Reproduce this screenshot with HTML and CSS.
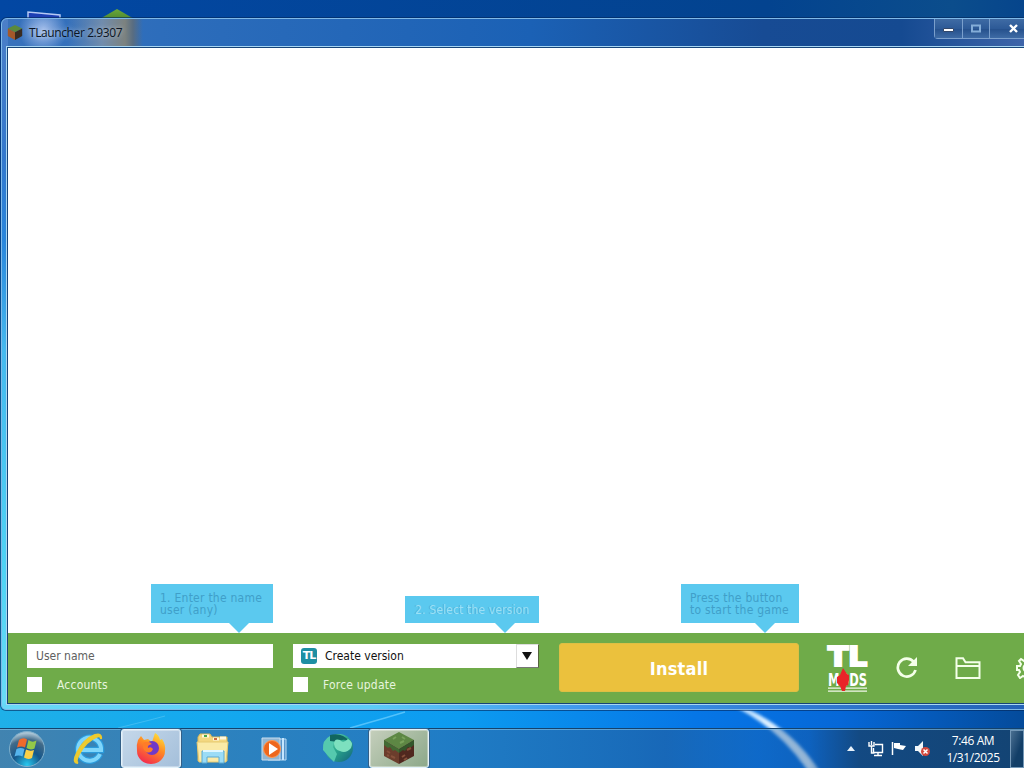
FILE: index.html
```html
<!DOCTYPE html>
<html lang="en">
<head>
	<title>TLauncher 2.9307</title>
	<meta charset="UTF-8">
	<link rel="stylesheet" href="styles.css">
</head>
<body>
	<div id="desktop">
		<svg class="wallpaper" width="1024" height="768" viewBox="0 0 1024 768">
			<defs>
				<linearGradient id="topSky" x1="0" x2="1" y1="0" y2="0">
					<stop offset="0" stop-color="#0247a3"/>
					<stop offset=".75" stop-color="#03438f"/>
					<stop offset=".93" stop-color="#0b4d8c"/>
					<stop offset="1" stop-color="#06458c"/>
				</linearGradient>
				<linearGradient id="leftSky" x1="0" x2="0" y1="0" y2="1">
					<stop offset="0" stop-color="#0548a4"/>
					<stop offset=".3" stop-color="#0869cf"/>
					<stop offset=".6" stop-color="#16aeee"/>
					<stop offset="1" stop-color="#20b5e8"/>
				</linearGradient>
				<linearGradient id="bottomSky" x1="0" x2="1" y1="0" y2="0">
					<stop offset="0" stop-color="#1fb0e8"/>
					<stop offset=".2" stop-color="#14a9ef"/>
					<stop offset=".45" stop-color="#0c9bf0"/>
					<stop offset=".68" stop-color="#0676e6"/>
					<stop offset=".82" stop-color="#0668d8"/>
					<stop offset="1" stop-color="#044b9b"/>
				</linearGradient>
				<linearGradient id="grass" x1="0" x2="0" y1="0" y2="1">
					<stop offset="0" stop-color="#69a93a"/>
					<stop offset="1" stop-color="#4d8530"/>
				</linearGradient>
				<filter id="soft"><feGaussianBlur stdDeviation="1.5"/></filter>
			</defs>
			<rect width="1024" height="60" fill="url(#topSky)"/>
			<rect y="18" width="20" height="700" fill="url(#leftSky)"/>
			<rect y="700" width="1024" height="68" fill="url(#bottomSky)"/>
			<path d="M118 728 L150 720 L165 716" stroke="#58c6f5" stroke-width="1" fill="none" opacity=".6"/>
			<path d="M350 728 L385 718 L405 712" stroke="#6fd0ff" stroke-width="1.5" fill="none" opacity=".7"/>
			<path d="M732 704 Q786 722 818 770 L808 770 Q780 728 732 704Z" fill="#e8f6ff" stroke="#b5dcff" stroke-width="2" filter="url(#soft)"/>
			<path d="M28 24 V12 L60 15 V24Z" fill="#1d3fb4" stroke="#b5c9f4" stroke-width="1.5"/>
			<path d="M98 20 L117 9 L136 20Z" fill="url(#grass)"/>
		</svg>

		<div class="window">
			<div class="titlebar">
				<svg class="app-icon" viewBox="0 0 60 60" width="16" height="17">
					<path d="M30 2 L57 15 L30 29 L3 15Z" fill="#5a8a3d"/>
					<path d="M3 15 L30 29 V58 L3 43Z" fill="#a4582a"/>
					<path d="M57 15 L30 29 V58 L57 43Z" fill="#3a2b20"/>
				</svg>
				<span class="title">TLauncher 2.9307</span>
				<div class="controls">
					<span class="control minimize"><svg width="12" height="5"><path d="M.5 .5h10v3h-10z" fill="#fff" stroke="#31476b"/></svg></span>
					<span class="control maximize"><svg width="12" height="9"><path d="M2 1.5h8v6H2z" fill="none" stroke="#84add8" stroke-width="2"/></svg></span>
					<span class="control close"><svg width="11" height="9"><path d="M2 1 L9 8 M9 1 L2 8" stroke="#fff" stroke-width="2.4"/></svg></span>
				</div>
			</div>
			<div class="content">
				<div class="page"></div>
				<div class="launcher">
					<div class="field">
						<div class="hint hint-name">1. Enter the name<br>user (any)</div>
						<div class="input">User name</div>
						<div class="check"><span class="box"></span><span class="label">Accounts</span></div>
					</div>
					<div class="field">
						<div class="hint hint-version">2. Select the version</div>
						<div class="select">
							<span class="badge">TL</span>
							<span>Create version</span>
							<span class="arrow"><svg width="10" height="8"><path d="M0 0h10L5 8z" fill="#111"/></svg></span>
						</div>
						<div class="check"><span class="box"></span><span class="label">Force update</span></div>
					</div>
					<div class="action">
						<div class="hint hint-install">Press the button<br>to start the game</div>
						<button class="install">Install</button>
					</div>
					<svg class="mods" width="41" height="48" viewBox="0 0 41 48">
						<text class="mods-top" x="1" y="22" textLength="39" lengthAdjust="spacingAndGlyphs">TL</text>
						<text class="mods-name" x="1" y="42" textLength="39" lengthAdjust="spacingAndGlyphs">MODS</text>
						<path d="M1 44.2h39M1 47.200h39" stroke="#f1f8e9" stroke-width="1.300"/>
						<path d="M16 24l2 3 2 3 2 1v5l-1 5-2 1-1 5h-3l-2-5-3-3v-6l3-2z" fill="#e92428"/>
					</svg>
					<svg class="refresh" width="22" height="22" viewBox="0 0 22 22">
						<path d="M17.500 4.500A9 9 0 1 0 19.500 13" fill="none" stroke="#f4ffe9" stroke-width="2.700"/>
						<path d="M21 0v9h-9z" fill="#f4ffe9"/>
					</svg>
					<svg class="folder" width="26" height="24" viewBox="0 0 26 24">
						<path d="M1.500 22V2.200h6.500l2.500 4h14V22z M1.500 10h23" fill="none" stroke="#f4ffe9" stroke-width="2"/>
					</svg>
					<svg class="gear" width="22" height="22" viewBox="0 0 22 22">
						<path d="M9 1h4v3l2 1 3-2 3 3-2 3 1 1h2v4h-2l-1 2 2 3-3 3-3-2-2 1v2H9v-3l-2-1-3 2-2-3 2-3-1-2H1V9h3l1-2-2-3 2-2 3 2 1-1z" fill="none" stroke="#f4ffe9" stroke-width="2"/>
						<circle cx="11" cy="11" r="3.500" fill="none" stroke="#f4ffe9" stroke-width="2"/>
					</svg>
				</div>
			</div>
		</div>

		<div class="taskbar">
			<div class="task start">
				<svg width="38" height="38" viewBox="0 0 38 38">
					<defs>
						<radialGradient id="orb" cx=".5" cy=".95" r=".9">
							<stop offset="0" stop-color="#27c8ef"/>
							<stop offset=".45" stop-color="#15568a"/>
							<stop offset=".8" stop-color="#426b89"/>
							<stop offset="1" stop-color="#a9c3d4"/>
						</radialGradient>
					</defs>
					<circle cx="19" cy="19" r="17.500" fill="url(#orb)" stroke="#7fb0cc"/>
					<path d="M11 10q4-3 8-.5l-2 8q-4-2-8 0z" fill="#ef6a2c"/>
					<path d="M20.500 10q4 3 8 .5l-2 8q-4 2-8-.5z" fill="#93c849"/>
					<path d="M8.500 19q4-2 8 0l-2 7.500q-4-2-8 0z" fill="#56b4ec"/>
					<path d="M18 19.500q4 2 8 .5l-2 8q-4 2-8-.5z" fill="#fbd048"/>
				</svg>
			</div>
			<div class="task">
				<svg width="32" height="32" viewBox="0 0 32 32">
					<path d="M27 21a11.500 11.500 0 1 1 1-6v2H8" fill="none" stroke="#2b9bdc" stroke-width="6.500"/>
					<path d="M27 21a11.500 11.500 0 1 1 1-6v2H8" fill="none" stroke="#7fd6fb" stroke-width="4"/>
					<path d="M5 30Q-1 30 4 20 11 6 22 2q7-2 6 4 0-4-5-2Q13 8 6 21q-4 8-1 9z" fill="#f7d32e" stroke="#ecc92e" stroke-width="2"/>
				</svg>
			</div>
			<div class="task open">
				<svg width="32" height="32" viewBox="0 0 32 32">
					<defs>
						<linearGradient id="fox" x1=".8" x2=".3" y1="0" y2="1">
							<stop offset="0" stop-color="#ffe43a"/>
							<stop offset=".45" stop-color="#ff8a24"/>
							<stop offset="1" stop-color="#f3294f"/>
						</linearGradient>
					</defs>
					<path d="M3 8l3-4 3 4 4-1 4 3 3-9q4 2 5 7l2-1q4 6 3 12a14 13 0 0 1-28 0Q1 13 3 8z" fill="url(#fox)"/>
					<circle cx="17" cy="16" r="7" fill="#7039c8"/>
					<path d="M8 11q5-3 9 1-5 1-4 4 3-2 5 1-2 5-7 3-4-3-3-9z" fill="#ff7c28"/>
				</svg>
			</div>
			<div class="task">
				<svg width="34" height="32" viewBox="0 0 34 32">
					<path d="M2 4l2-3h10l2 3h15v24H2z" fill="#f3d780" stroke="#d8b75b"/>
					<path d="M6 3h7M17 6h6M24 5h6" stroke="#fff8dd" stroke-width="3"/>
					<path d="M8 3h3" stroke="#44a84c" stroke-width="2"/>
					<path d="M18 6h3" stroke="#c86a43" stroke-width="2"/>
					<path d="M1 9h31l-2 20H3z" fill="#faeaa7" stroke="#e6ca73"/>
					<path d="M6 30V18h22v12h-5v-6H11v6z" fill="#9bdcf6" stroke="#5baad2"/>
					<path d="M7 18h20" stroke="#e0f7ff" stroke-width="2"/>
				</svg>
			</div>
			<div class="task player">
				<svg width="28" height="26" viewBox="0 0 28 26">
					<path d="M7 3h18v21H7z" fill="#5794c9" stroke="#b9dbf3"/>
					<path d="M22 2v22" stroke="#c6e7ff" stroke-width="2"/>
					<path d="M1 2h18v22H1z" fill="#91b6d4" stroke="#c9deef"/>
					<circle cx="11" cy="13" r="8.500" fill="#ee671d" stroke="#ff9a55"/>
					<path d="M8 7l9 6-9 6z" fill="#fff"/>
				</svg>
			</div>
			<div class="task globe">
				<svg width="33" height="30" viewBox="0 0 33 30">
					<defs>
						<linearGradient id="teal" x1="0" x2="1" y1="0" y2="1">
							<stop offset="0" stop-color="#77e3bd"/>
							<stop offset=".5" stop-color="#2aa58b"/>
							<stop offset="1" stop-color="#12637c"/>
						</linearGradient>
					</defs>
					<circle cx="17" cy="14" r="14" fill="url(#teal)"/>
					<path d="M8 2Q0 6 1 16l7 8 4 4 3-8-4-7 1-5z" fill="#55c9ae"/>
					<path d="M8 1q12-3 19 6-7-3-11 1L8 7z" fill="#11665f"/>
					<path d="M12 10q0-6 6-4 3 4 8-1 6 3 3 9-5 6-11 3-5-1-6-7z" fill="#7de0bf"/>
				</svg>
			</div>
			<div class="task current">
				<svg width="34" height="34" viewBox="0 0 34 34">
					<path d="M17 1L32 9 17 18 2 9z" fill="#5d8744"/>
					<path d="M2 9l15 9v15L2 25z" fill="#6b3d2c"/>
					<path d="M32 9l-15 9v15l15-8z" fill="#50281f"/>
					<path d="M2 9l15 9v4l-4-3-2 1-3-4-2 1-4-3z" fill="#426a33"/>
					<path d="M32 9l-15 9v4l4-3 2 1 3-4 2 1 4-3z" fill="#33572b"/>
					<path d="M5 20l3 2M9 25l4 2M20 26l3-2M25 19l4-2M22 29l3-2M5 24l2 1" stroke="#85503a" stroke-width="2"/>
					<path d="M11 8l3-2M18 12l4-2M20 6l3 2" stroke="#78a25a" stroke-width="2"/>
				</svg>
			</div>
			<div class="tray">
				<svg class="up" width="8" height="5"><path d="M0 5L4 0l4 5z" fill="#e8f2fa"/></svg>
				<svg class="network" width="16" height="16" viewBox="0 0 16 16">
					<path d="M1 1v4h5V1M3.500 0v4M3.500 5v7h3M7 3.500h7.500v8H5.500V7M10 12v2M6 14.500h8" fill="none" stroke="#fff" stroke-width="1.400"/>
				</svg>
				<svg class="flag" width="16" height="15" viewBox="0 0 16 15">
					<path d="M1.500 1v13" stroke="#fff" stroke-width="1.500"/>
					<path d="M3 2h6v2l6 1-3 4-5-1-4-1z" fill="#fff"/>
				</svg>
				<svg class="sound" width="16" height="16" viewBox="0 0 16 16">
					<path d="M0 5h3l5-5v15l-5-5H0z" fill="#f2f6f9"/>
					<circle cx="10.500" cy="10.500" r="4.500" fill="#d3473c"/>
					<path d="M8.500 8.500l4 4m0-4l-4 4" stroke="#fff" stroke-width="1.500"/>
				</svg>
				<div class="clock">7:46 AM<br>1/31/2025</div>
				<div class="peek"></div>
			</div>
		</div>
	</div>
</body>
</html>
```
FILE: styles.css
```css
* {
	box-sizing: border-box;
}

body {
	margin: 0;
	overflow: hidden;
	font: 12px "DejaVu Sans Condensed", "DejaVu Sans", Tahoma, sans-serif;
}

svg {
	display: block;
	flex: none;
}

#desktop {
	position: relative;
	width: 1024px;
	height: 768px;
	overflow: hidden;
}

.wallpaper {
	position: absolute;
	top: 0;
	left: 0;
}

/* launcher window, runs off the right edge of the screen */
.window {
	position: absolute;
	top: 18px;
	left: 1px;
	width: 1060px;
	height: 692px;
	display: flex;
	flex-direction: column;
	padding: 0 6px 5px 5px;
	border: 1px solid #7fb9e8;
	border-radius: 6px 6px 5px 5px;
	background:
		linear-gradient(90deg, #68d8f7, #5cccf8 35%, #439ef0 52%, #337fd8 72%, #2462b7 97%) 0 100% / 100% 6px no-repeat,
		linear-gradient(#4c7fc8, #3378cd 20%, #2a86dc 32%, #45b9ef 48%, #4fd3f5 80%, #6adcf7) 0 0 / 6px 100% no-repeat,
		linear-gradient(90deg, #3972bc, #2d6dbb 15%, #1b61b5 50%, #174b94 72%, #154a91 85%, #3f65aa 97%);
	box-shadow: 0 0 0 1px rgba(3, 39, 89, .6);
}

.titlebar {
	display: flex;
	flex: none;
	height: 28px;
	background:
		radial-gradient(ellipse 24px 24px at 36px 11px, rgba(190, 209, 247, .8), transparent),
		linear-gradient(90deg, transparent 60px, rgba(146, 156, 165, .65) 95px, rgba(132, 132, 120, .9) 118px, rgba(98, 108, 115, .8) 126px, transparent 136px);
}

.app-icon {
	margin-top: 5px;
}

.title {
	margin: 6px 0 0 6px;
	font: 12px/16px "Open Sans", "Noto Sans", sans-serif;
	letter-spacing: -.4px;
	color: #0b1524;
	text-shadow: 0 0 5px rgba(255, 255, 255, .6);
}

.controls {
	display: flex;
	height: 20px;
	margin-left: auto;
	margin-right: 18px;
	border: 1px solid #7a9fcc;
	border-top: 0;
	border-radius: 0 0 4px 4px;
}

.control {
	display: flex;
	align-items: center;
	justify-content: center;
	width: 28px;
	border-right: 1px solid #7a9fcc;
	background: linear-gradient(#3f6ba4, #2d5a97 50%, #244f8b 51%, #3e6ba5);
}

.minimize {
	padding-top: 4px;
}

.maximize {
	width: 27px;
	padding-bottom: 1px;
}

.close {
	width: 45px;
	padding-left: 1px;
	border-right: 0;
}

.content {
	display: flex;
	flex: 1;
	flex-direction: column;
	border: 1px solid #164478;
	outline: 1px solid #a8d6f2;
}

.page {
	flex: 1;
	background: #fff;
}

.launcher {
	display: flex;
	flex: none;
	height: 70px;
	padding: 10px 0 0 19px;
	background: #6fab49;
}

.field {
	position: relative;
	width: 246px;
	margin-right: 20px;
	padding-top: 1px;
}

.input,
.select {
	display: flex;
	align-items: center;
	height: 24px;
	padding-left: 9px;
	background: #fff;
	color: #606060;
}

.select {
	gap: 8px;
	padding-left: 8px;
	color: #111;
}

.badge {
	width: 16px;
	height: 16px;
	border-radius: 3px;
	background: #1e8fa3;
	color: #fff;
	font: bold 11px/16px "DejaVu Sans", sans-serif;
	letter-spacing: -1px;
	text-align: center;
}

.arrow {
	display: flex;
	align-items: center;
	justify-content: center;
	width: 23px;
	height: 24px;
	margin-left: auto;
	padding-right: 1px;
	border: 1px solid #ddd;
	border-right-color: #55643d;
	border-bottom-color: #777;
}

.check {
	display: flex;
	align-items: center;
	gap: 15px;
	height: 15px;
	margin-top: 9px;
	letter-spacing: .2px;
	color: #e7f5df;
}

.label {
	padding-top: 2px;
	line-height: 15px;
}

.box {
	width: 15px;
	height: 15px;
	background: #fff;
}

.action {
	position: relative;
	width: 240px;
}

.install {
	display: block;
	width: 240px;
	height: 49px;
	padding: 2px 0 0;
	border: 1px solid #ddbf44;
	border-radius: 3px;
	background: #ebc13d;
	color: #fff;
	font: bold 18px "DejaVu Sans Condensed", "DejaVu Sans", sans-serif;
	letter-spacing: .2px;
}

/* blue bubbles above the launcher controls */
.hint {
	position: absolute;
	padding: 8px 0 0 9px;
	background: #5bc9ef;
	color: #409fc9;
	font-size: 12px;
	line-height: 12px;
	letter-spacing: .25px;
	white-space: nowrap;
}

.hint:after {
	content: "";
	position: absolute;
	top: 100%;
	border: 10px solid transparent;
	border-top-color: #5bc9ef;
	border-bottom: 0;
}

.hint-name {
	top: -59px;
	left: 124px;
	width: 122px;
	height: 39px;
}

.hint-name:after {
	left: 78px;
}

.hint-version {
	top: -47px;
	left: 112px;
	width: 134px;
	height: 27px;
	padding-left: 10px;
	letter-spacing: .15px;
	color: #9ce0f6;
	text-shadow: -1px 0 #4aafd8;
}

.hint-version:after {
	left: 90px;
}

.hint-install {
	top: -59px;
	left: 122px;
	width: 118px;
	height: 39px;
}

.hint-install:after {
	left: 74px;
}

.mods {
	margin: 1px 0 0 28px;
	overflow: visible;
}

.mods text {
	fill: #fff;
	font-family: "DejaVu Sans Condensed", "DejaVu Sans", sans-serif;
	font-weight: bold;
}

.mods-top {
	font-size: 27px;
	stroke: #fff;
	stroke-width: 2px;
}

.mods-name {
	font-size: 17px;
}

.refresh {
	margin: 14px 0 0 28px;
}

.folder {
	margin: 13px 0 0 37px;
}

.gear {
	margin: 14px 0 0 35px;
}

.taskbar {
	position: absolute;
	left: 0;
	bottom: 0;
	display: flex;
	align-items: center;
	width: 100%;
	height: 40px;
	border-top: 1px solid #14426c;
	background: linear-gradient(90deg, rgba(67, 129, 173, .95), rgba(47, 128, 187, .95) 20%, rgba(33, 123, 195, .95) 43%, rgba(28, 99, 172, .8) 65%, rgba(27, 95, 166, .4) 74%, rgba(25, 85, 150, .4) 79%, rgba(20, 72, 126, .95) 84%, rgba(20, 67, 113, .95));
	box-shadow: inset 0 1px rgba(137, 197, 232, .6);
}

.task {
	display: flex;
	align-items: center;
	justify-content: center;
	width: 60px;
	height: 39px;
	margin-right: 2px;
}

.start {
	width: 54px;
	margin-right: 5px;
}

.open,
.current {
	border: 1px solid #e2f2fb;
	border-radius: 3px;
	background: linear-gradient(135deg, #c5d8ea, #a4bfda);
	box-shadow: inset 0 0 0 1px rgba(255, 255, 255, .35), 0 0 0 1px #335f87;
}

.open svg {
	margin-top: -2px;
}

.current {
	background: linear-gradient(135deg, #c5cfbc, #8ca889);
}

.current svg {
	margin-top: -2px;
}

.player {
	padding-right: 1px;
}

.globe {
	padding-left: 2px;
}

.tray {
	display: flex;
	align-items: center;
	height: 39px;
	margin-left: auto;
}

.up {
	margin-right: 1px;
}

.network {
	margin-left: 12px;
}

.flag {
	margin-left: 7px;
}

.sound {
	margin-left: 8px;
}

.clock {
	width: 62px;
	margin-left: 11px;
	color: #fff;
	font: 12px/17px "Open Sans", "Noto Sans", sans-serif;
	letter-spacing: -.4px;
	text-align: center;
}

.peek {
	width: 14px;
	height: 38px;
	margin-left: 6px;
	border: 1px solid #7498b7;
	background: linear-gradient(110deg, #4a6f91, #123e67 60%);
}
```
